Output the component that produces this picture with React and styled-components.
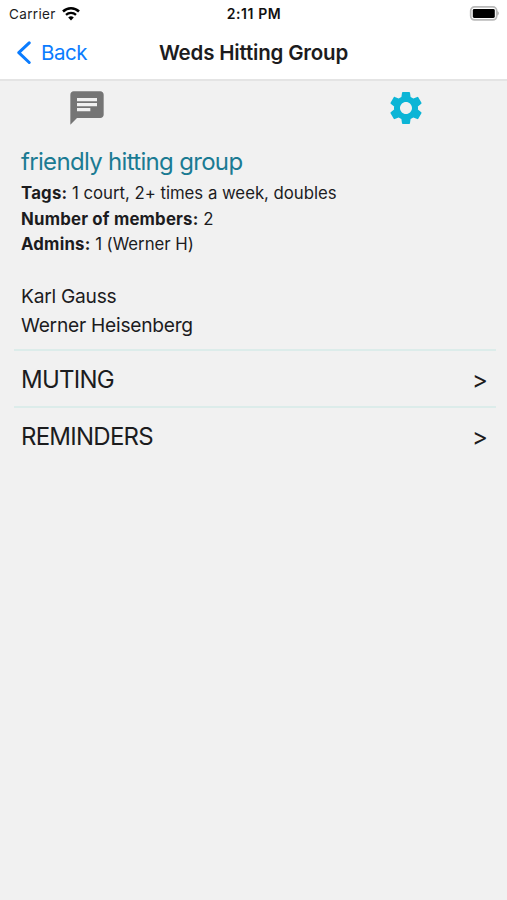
import React from "react";
import styled, { createGlobalStyle } from "styled-components";
import { MdChat, MdSettings } from "react-icons/md";

const GlobalStyle = createGlobalStyle`
  * {
    box-sizing: border-box;
  }
  body {
    margin: 0;
    background: #f1f1f1;
    font-family: Inter, "Liberation Sans", sans-serif;
    color: #1c1c1e;
  }
`;

const Screen = styled.div`
  min-height: 900px;
  background: #f1f1f1;
`;

const Header = styled.header`
  height: 81px;
  background: #fff;
  border-bottom: 2px solid #e4e4e4;
`;

const StatusBar = styled.div`
  display: grid;
  grid-template-columns: 1fr auto 1fr;
  align-items: center;
  height: 27px;
  padding: 0 8px 0 9px;
  font-size: 13.5px;
`;

const Carrier = styled.div`
  display: flex;
  align-items: center;
  gap: 6px;
  letter-spacing: 0.35px;
`;

const Time = styled.div`
  font-size: 14px;
  font-weight: 600;
  letter-spacing: 0.6px;
  color: #111;
`;

const Battery = styled.svg`
  justify-self: end;
`;

const NavBar = styled.nav`
  display: grid;
  grid-template-columns: 1fr auto 1fr;
  align-items: center;
  height: 51px;
  padding: 0 16px;
`;

const Back = styled.a`
  display: flex;
  align-items: center;
  gap: 9px;
  font-size: 20.5px;
  letter-spacing: -0.5px;
  color: #0a7cff;
`;

const Title = styled.h1`
  margin: 0;
  font-size: 20.5px;
  font-weight: 600;
  letter-spacing: -0.18px;
`;

const Tabs = styled.div`
  display: flex;
  justify-content: space-between;
  padding: 7px 81px 0 67px;
`;

const Tab = styled.div`
  display: flex;
  font-size: 40px;
  color: ${(props) => (props.$active ? "#0cb5d6" : "#757575")};
`;

const Details = styled.section`
  padding: 16px 21px 0;
`;

const GroupName = styled.h2`
  margin: 0 0 1px;
  font-size: 24px;
  line-height: 36px;
  font-weight: 400;
  letter-spacing: -0.68px;
  color: #1b7b93;
`;

const Info = styled.p`
  margin: 0;
  font-size: 16.8px;
  line-height: 25.6px;
  letter-spacing: -0.03px;
  white-space: nowrap;
`;

const Label = styled.b`
  font-weight: 700;
  letter-spacing: 0.2px;
`;

const Members = styled.ul`
  list-style: none;
  margin: 0;
  padding: 24px 0 9px;
`;

const Member = styled.li`
  font-size: 19.2px;
  line-height: 29px;
  letter-spacing: -0.25px;
`;

const Options = styled.section`
  padding: 0 11px 0 14px;
`;

const Option = styled.div`
  display: flex;
  justify-content: space-between;
  align-items: center;
  height: 57px;
  padding: 2px 8px 0 7px;
  border-top: 2px solid #dcecea;
  font-size: 24px;
  letter-spacing: -0.75px;
`;

const Arrow = styled.span`
  letter-spacing: 0;
`;

function App() {
  return (
    <Screen>
      <GlobalStyle />
      <Header>
        <StatusBar>
          <Carrier>
            Carrier
            <svg width="18" height="14" viewBox="0 0 18 14" fill="none" stroke="#000">
              <path d="M1 4.5a11.6 11.6 0 0 1 16 0" strokeWidth="2.5" />
              <path d="M4 7.8a7.3 7.3 0 0 1 10 0" strokeWidth="2.3" />
              <path d="M9 13.4 6.2 10.6a4.1 4.1 0 0 1 5.6 0Z" fill="#000" stroke="none" />
            </svg>
          </Carrier>
          <Time>2:11 PM</Time>
          <Battery width="30" height="15" viewBox="0 0 30 15">
            <rect x="1.7" y="0.9" width="26" height="13" rx="3.8" fill="#fff" stroke="#b9b9b9" strokeWidth="1.7" />
            <rect x="3.8" y="3" width="22" height="9" rx="1.4" fill="#000" />
            <path d="M28.3 5c2 .8 2 3.8 0 4.6Z" fill="#aaa" />
          </Battery>
        </StatusBar>
        <NavBar>
          <Back>
            <svg width="16" height="24" viewBox="0 0 16 24" fill="none">
              <path d="M13.2 1.9 2.8 11.7l10.4 9.8" stroke="#0a7cff" strokeWidth="3" strokeLinecap="round" strokeLinejoin="round" />
            </svg>
            Back
          </Back>
          <Title>Weds Hitting Group</Title>
        </NavBar>
      </Header>
      <Tabs>
        <Tab>
          <MdChat />
        </Tab>
        <Tab $active>
          <MdSettings />
        </Tab>
      </Tabs>
      <Details>
        <GroupName>friendly hitting group</GroupName>
        <Info>
          <Label>Tags:</Label> 1 court, 2+ times a week, doubles
        </Info>
        <Info>
          <Label>Number of members:</Label> 2
        </Info>
        <Info>
          <Label>Admins:</Label> 1 (Werner H)
        </Info>
        <Members>
          <Member>Karl Gauss</Member>
          <Member>Werner Heisenberg</Member>
        </Members>
      </Details>
      <Options>
        <Option>
          MUTING <Arrow>&gt;</Arrow>
        </Option>
        <Option>
          REMINDERS <Arrow>&gt;</Arrow>
        </Option>
      </Options>
    </Screen>
  );
}

export default App;
